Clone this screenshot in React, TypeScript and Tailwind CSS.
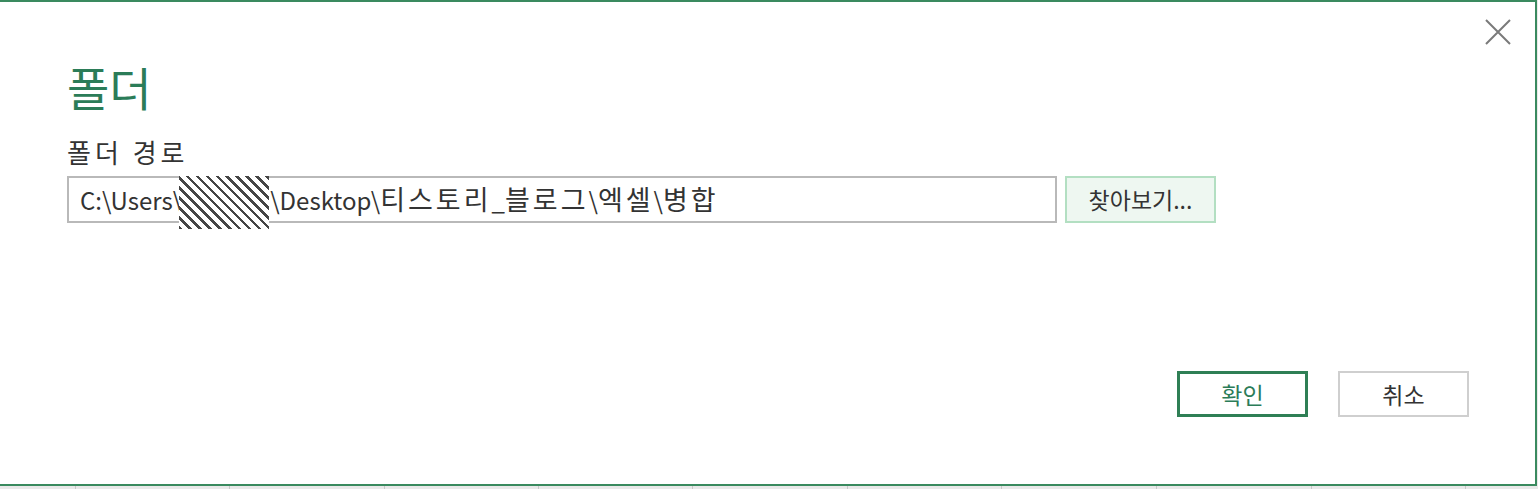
const ticks = [75, 229, 384, 538, 692, 847, 1001, 1156, 1311, 1465];

export default function App() {
  return (
    <div className="relative h-[489px] w-[1538px] overflow-hidden bg-[#e9e9e9] font-['Noto_Sans_CJK_KR','Noto_Sans',sans-serif]">
      {/* dialog */}
      <div className="relative flex h-[486px] w-[1537px] flex-col border-y-2 border-r-2 border-[#3a8a5f] bg-white pl-[67px]">
        <button className="absolute right-[24px] top-[17px] text-[#7a7a7a]">
          <svg width="26" height="26" viewBox="0 0 26 26" fill="none" stroke="currentColor" strokeWidth="2">
            <path d="M1 1L25 25M25 1L1 25" />
          </svg>
        </button>

        <h1 className="mt-[53px] text-[46px] font-normal leading-[62px] text-[#2b7c58]">폴더</h1>

        <label className="mt-[19px] text-[26px] leading-[32px] tracking-[4px] text-[#333]">폴더 경로</label>

        <div className="mt-[8px] flex items-center gap-[8px]">
          <div className="relative flex h-[47px] w-[990px] items-center whitespace-pre border-2 border-[#b9b9b9] pl-[11px] text-[24px] text-[#333]">
            <span>C:\Users\</span>
            <span className="inline-block w-[88px]" />
            <span>\Desktop\</span>
            <span className="text-[27px] tracking-[3px]">티스토리</span>
            <span>_</span>
            <span className="text-[27px] tracking-[3px]">블로그</span>
            <span>\</span>
            <span className="text-[27px] tracking-[3px]">엑셀</span>
            <span>\</span>
            <span className="text-[27px] tracking-[3px]">병합</span>
            {/* redaction hatch */}
            <div className="absolute left-[110px] top-[-2px] h-[53px] w-[90px] bg-[repeating-linear-gradient(45deg,#454545_0px,#454545_2.5px,#ffffff_2.5px,#ffffff_7px)]" />
          </div>
          <button className="flex h-[47px] w-[151px] items-center justify-center border-2 border-[#b3dfc2] bg-[#eef7f1] text-[23px] text-[#333]">
            찾아보기...
          </button>
        </div>

        <div className="mt-[148px] flex justify-end gap-[30px] pr-[66px]">
          <button className="flex h-[46px] w-[131px] items-center justify-center border-[3px] border-[#2f7f55] text-[23px] text-[#2b7c58]">
            확인
          </button>
          <button className="flex h-[46px] w-[131px] items-center justify-center border-2 border-[#cfcfcf] text-[23px] text-[#333]">
            취소
          </button>
        </div>
      </div>

      {/* sheet grid below */}
      <div className="relative h-[3px] w-full bg-[#e9e9e9]">
        {ticks.map((x) => (
          <div key={x} className="absolute top-0 h-[3px] w-px bg-[#c8c8c8]" style={{ left: x }} />
        ))}
      </div>
    </div>
  );
}
